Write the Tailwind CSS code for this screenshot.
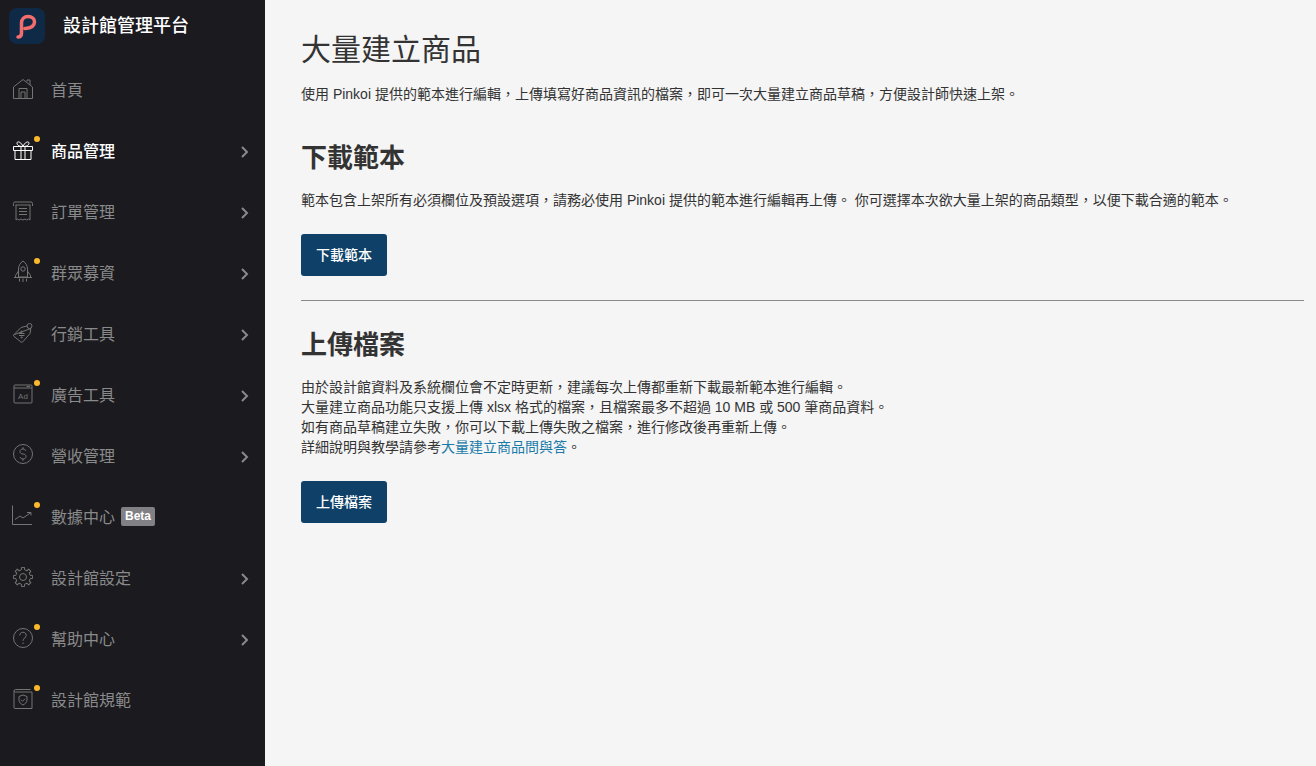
<!DOCTYPE html>
<html lang="zh-Hant-TW">
<head>
<meta charset="utf-8">
<title>大量建立商品</title>
<script src="https://cdn.jsdelivr.net/npm/@tailwindcss/browser@4"></script>
</head>
<body class="font-['Liberation_Sans','Noto_Sans_CJK_TC',sans-serif] bg-[#f5f5f5] text-[#333]">
<div class="flex h-[766px] w-[1316px] overflow-hidden">
  <aside class="w-[265px] shrink-0 bg-[#1a1a1f] flex flex-col">
    <div class="flex items-center h-[52px] pl-[9px]">
      <svg class="w-[36px] h-[36px]" viewBox="0 0 36 36"><rect width="36" height="36" rx="8" fill="#0f2a47"/><path d="M9 29c2 0 3.500-1.500 3.500-4V15c0-4 3-6.500 6.500-6.500 4 0 6.500 2.500 6.500 5.500 0 4-3.500 6-9.500 6.500" fill="none" stroke="#f26d6d" stroke-width="3.500" stroke-linecap="round"/></svg>
      <span class="ml-[18px] text-[18px] leading-[24px] font-medium text-white">設計館管理平台</span>
    </div>
    <nav class="flex flex-col pt-[8px]">
      <a class="h-[61px] relative flex items-center pl-[13px] pr-[15px] text-[16px] text-[#8a8a8a]">
        <svg class="w-[20px] h-[20px] -mt-[4px] text-[#757575]" viewBox="0 0 20 20" fill="none" stroke="currentColor" stroke-width="1"><path d="M.5 19.500V8L10 .5l9.500 7.500v11.500zM14 2.500V1h3v5M6 19.500V9.500h8v10M8 19.500V13h4v6.500"/></svg>
        <span class="ml-[18px]">首頁</span>
      </a>
      <a class="h-[61px] relative flex items-center pl-[13px] pr-[15px] text-[16px] text-white font-medium">
        <svg class="w-[20px] h-[20px] -mt-[4px]" viewBox="0 0 20 20" fill="none" stroke="currentColor" stroke-width="1"><path d="M.5 6.500h19v4H.5zM2 10.500v9h16v-9M8 6.500v13M12 6.500v13M10 6.500C7 6.500 4 5.500 4 3.200S8 1.500 10 6.500C12 1.500 16 1 16 3.200S13 6.500 10 6.500z"/></svg>
        <span class="ml-[18px]">商品管理</span>
        <span class="absolute left-[34px] top-[15px] w-[6px] h-[6px] rounded-full bg-[#fdb92c]"></span>
        <svg class="ml-auto w-[10px] h-[14px]" viewBox="0 0 10 14" fill="none" stroke="#8a8a8a" stroke-width="2"><path d="M2 2l5 5-5 5"/></svg>
      </a>
      <a class="h-[61px] relative flex items-center pl-[13px] pr-[15px] text-[16px] text-[#8a8a8a]">
        <svg class="w-[20px] h-[20px] -mt-[4px] text-[#757575]" viewBox="0 0 20 20" fill="none" stroke="currentColor" stroke-width="1"><path d="M.5 5V2.500A1.500 1.500 0 0 1 2 1h16a1.500 1.500 0 0 1 1.500 1.500V5M2.500 4h15M3 4v15l1.500-1 1.750 1 1.750-1 2 1 2-1 1.750 1 1.750-1 1.500 1V4M6 7.500h8M6 10.500h8M6 13.500h8"/></svg>
        <span class="ml-[18px]">訂單管理</span>
        <svg class="ml-auto w-[10px] h-[14px]" viewBox="0 0 10 14" fill="none" stroke="#8a8a8a" stroke-width="2"><path d="M2 2l5 5-5 5"/></svg>
      </a>
      <a class="h-[61px] relative flex items-center pl-[13px] pr-[15px] text-[16px] text-[#8a8a8a]">
        <svg class="w-[20px] h-[20px] -mt-[5px] overflow-visible text-[#757575]" viewBox="0 0 20 20" fill="none" stroke="currentColor" stroke-width="1"><path d="M10 0c3 2 4.500 5 4.500 8v8h-9V8C5.500 5 7 2 10 0zM5.500 10L2.500 14.500V16.500h15V14.500L14.500 10M1 16.500h18M6.500 17.500v3M10 17.500v3.500M13.500 17.500v3"/><circle cx="10" cy="8" r="2.200"/></svg>
        <span class="ml-[18px]">群眾募資</span>
        <span class="absolute left-[34px] top-[15px] w-[6px] h-[6px] rounded-full bg-[#fdb92c]"></span>
        <svg class="ml-auto w-[10px] h-[14px]" viewBox="0 0 10 14" fill="none" stroke="#8a8a8a" stroke-width="2"><path d="M2 2l5 5-5 5"/></svg>
      </a>
      <a class="h-[61px] relative flex items-center pl-[13px] pr-[15px] text-[16px] text-[#8a8a8a]">
        <svg class="w-[20px] h-[20px] -mt-[4px] text-[#757575]" viewBox="0 0 20 20" fill="none" stroke="currentColor" stroke-width="1"><path d="M.8 11.800 8 4.500l6-1.500M17.800 5.500 17 10.500 9.800 18.800a1.500 1.500 0 0 1-2 .1L.9 13.300a1.200 1.200 0 0 1-.1-1.500zM6 10.500h5.500M6 12.500h5.500"/><circle cx="16.500" cy="3" r="2.500"/><circle cx="8.700" cy="8.700" r=".7"/><circle cx="8.700" cy="14.500" r=".7"/></svg>
        <span class="ml-[18px]">行銷工具</span>
        <svg class="ml-auto w-[10px] h-[14px]" viewBox="0 0 10 14" fill="none" stroke="#8a8a8a" stroke-width="2"><path d="M2 2l5 5-5 5"/></svg>
      </a>
      <a class="h-[61px] relative flex items-center pl-[13px] pr-[15px] text-[16px] text-[#8a8a8a]">
        <svg class="w-[20px] h-[20px] -mt-[4px] text-[#757575]" viewBox="0 0 20 20" fill="none" stroke="currentColor" stroke-width="1"><rect x="1" y="1" width="18" height="18" rx="1"/><path d="M1 4h18M13.500 2.600h3.500"/><text x="10" y="14.800" text-anchor="middle" font-size="8" fill="currentColor" stroke="none">Ad</text></svg>
        <span class="ml-[18px]">廣告工具</span>
        <span class="absolute left-[34px] top-[15px] w-[6px] h-[6px] rounded-full bg-[#fdb92c]"></span>
        <svg class="ml-auto w-[10px] h-[14px]" viewBox="0 0 10 14" fill="none" stroke="#8a8a8a" stroke-width="2"><path d="M2 2l5 5-5 5"/></svg>
      </a>
      <a class="h-[61px] relative flex items-center pl-[13px] pr-[15px] text-[16px] text-[#8a8a8a]">
        <svg class="w-[20px] h-[20px] -mt-[5px] text-[#757575]" viewBox="0 0 20 20" fill="none" stroke="currentColor" stroke-width="1"><circle cx="10" cy="10" r="9.500"/><path d="M13 7c-.4-1.200-1.500-2-3-2-1.800 0-3 1-3 2.500S8.200 10 10 10s3 1 3 2.500S11.800 15 10 15c-1.500 0-2.600-.8-3-2M10 3.200V5M10 15v1.800"/></svg>
        <span class="ml-[18px]">營收管理</span>
        <svg class="ml-auto w-[10px] h-[14px]" viewBox="0 0 10 14" fill="none" stroke="#8a8a8a" stroke-width="2"><path d="M2 2l5 5-5 5"/></svg>
      </a>
      <a class="h-[61px] relative flex items-center pl-[13px] pr-[15px] text-[16px] text-[#8a8a8a]">
        <svg class="w-[20px] h-[20px] -mt-[4px] overflow-visible text-[#757575]" viewBox="0 0 20 20" fill="none" stroke="currentColor" stroke-width="1"><path d="M-.5-.5V18.500H19M2 13.500l5-3.500 3 2 8-5.500M14 6.500H18V9.500"/></svg>
        <span class="ml-[18px]">數據中心</span>
        <span class="absolute left-[34px] top-[15px] w-[6px] h-[6px] rounded-full bg-[#fdb92c]"></span>
        <span class="ml-[6px] -mt-[3px] h-[19px] w-[34px] rounded-[2px] bg-[#808085] text-white text-[12px] font-bold leading-[19px] text-center">Beta</span>
      </a>
      <a class="h-[61px] relative flex items-center pl-[13px] pr-[15px] text-[16px] text-[#8a8a8a]">
        <svg class="w-[20px] h-[20px] -mt-[4px] text-[#757575]" viewBox="0 0 20 20" fill="none" stroke="currentColor" stroke-width="1" stroke-linejoin="round">
          <circle cx="10" cy="10" r="3.500"/>
          <path d="M7.200 3.250 8.360 2.890 8.480.42H11.520L11.640 2.890 12.800 3.250"/>
          <path transform="rotate(45 10 10)" d="M7.200 3.250 8.360 2.890 8.480.42H11.520L11.640 2.890 12.800 3.250"/>
          <path transform="rotate(90 10 10)" d="M7.200 3.250 8.360 2.890 8.480.42H11.520L11.640 2.890 12.800 3.250"/>
          <path transform="rotate(135 10 10)" d="M7.200 3.250 8.360 2.890 8.480.42H11.520L11.640 2.890 12.800 3.250"/>
          <path transform="rotate(180 10 10)" d="M7.200 3.250 8.360 2.890 8.480.42H11.520L11.640 2.890 12.800 3.250"/>
          <path transform="rotate(225 10 10)" d="M7.200 3.250 8.360 2.890 8.480.42H11.520L11.640 2.890 12.800 3.250"/>
          <path transform="rotate(270 10 10)" d="M7.200 3.250 8.360 2.890 8.480.42H11.520L11.640 2.890 12.800 3.250"/>
          <path transform="rotate(315 10 10)" d="M7.200 3.250 8.360 2.890 8.480.42H11.520L11.640 2.890 12.800 3.250"/>
        </svg>
        <span class="ml-[18px]">設計館設定</span>
        <svg class="ml-auto w-[10px] h-[14px]" viewBox="0 0 10 14" fill="none" stroke="#8a8a8a" stroke-width="2"><path d="M2 2l5 5-5 5"/></svg>
      </a>
      <a class="h-[61px] relative flex items-center pl-[13px] pr-[15px] text-[16px] text-[#8a8a8a]">
        <svg class="w-[20px] h-[20px] -mt-[4px] text-[#757575]" viewBox="0 0 20 20" fill="none" stroke="currentColor" stroke-width="1"><circle cx="10" cy="10" r="9.500"/><path d="M6.800 7.500C6.800 5.500 8.200 4.200 10 4.200s3.200 1.300 3.200 3.100c0 2.500-3.200 3-3.200 5.500M10 14.500V16"/></svg>
        <span class="ml-[18px]">幫助中心</span>
        <span class="absolute left-[34px] top-[15px] w-[6px] h-[6px] rounded-full bg-[#fdb92c]"></span>
        <svg class="ml-auto w-[10px] h-[14px]" viewBox="0 0 10 14" fill="none" stroke="#8a8a8a" stroke-width="2"><path d="M2 2l5 5-5 5"/></svg>
      </a>
      <a class="h-[61px] relative flex items-center pl-[13px] pr-[15px] text-[16px] text-[#8a8a8a]">
        <svg class="w-[20px] h-[20px] -mt-[4px] text-[#757575]" viewBox="0 0 20 20" fill="none" stroke="currentColor" stroke-width="1"><path d="M17.500.5H2.500A1.500 1.500 0 0 0 1 2V18.500A1 1 0 0 0 2 19.500H19V3H2.500A1.500 1.500 0 0 1 1 2M10 6l4 1.500V11c0 2.300-1.800 3.800-4 5-2.200-1.200-4-2.700-4-5V7.500zM8 10.800l1.500 1.500 2.500-2.500"/></svg>
        <span class="ml-[18px]">設計館規範</span>
        <span class="absolute left-[34px] top-[15px] w-[6px] h-[6px] rounded-full bg-[#fdb92c]"></span>
      </a>
    </nav>
  </aside>
  <main class="flex-1 pl-[36px] pr-[12px] pt-[30px]">
    <h1 class="text-[30px] leading-[40px] text-[#333]">大量建立商品</h1>
    <p class="mt-[14px] text-[14px] leading-[20px]">使用 Pinkoi 提供的範本進行編輯，上傳填寫好商品資訊的檔案，即可一次大量建立商品草稿，方便設計師快速上架。</p>
    <h2 class="mt-[37px] text-[26px] leading-[34px] font-bold">下載範本</h2>
    <p class="mt-[15px] text-[14px] leading-[20px]">範本包含上架所有必須欄位及預設選項，請務必使用 Pinkoi 提供的範本進行編輯再上傳。 你可選擇本次欲大量上架的商品類型，以便下載合適的範本。</p>
    <button class="mt-[24px] block w-[86px] h-[42px] rounded-[3px] bg-[#0f4168] text-white text-[14px] font-medium">下載範本</button>
    <hr class="mt-[24px] border-0 border-t border-[#8a8a8a]">
    <h2 class="mt-[27px] text-[26px] leading-[34px] font-bold">上傳檔案</h2>
    <p class="mt-[15px] text-[14px] leading-[20px]">由於設計館資料及系統欄位會不定時更新，建議每次上傳都重新下載最新範本進行編輯。<br>大量建立商品功能只支援上傳 xlsx 格式的檔案，且檔案最多不超過 10 MB 或 500 筆商品資料。<br>如有商品草稿建立失敗，你可以下載上傳失敗之檔案，進行修改後再重新上傳。<br>詳細說明與教學請參考<a class="text-[#1a7ba8]">大量建立商品問與答</a>。</p>
    <button class="mt-[24px] block w-[86px] h-[42px] rounded-[3px] bg-[#0f4168] text-white text-[14px] font-medium">上傳檔案</button>
  </main>
</div>
</body>
</html>
